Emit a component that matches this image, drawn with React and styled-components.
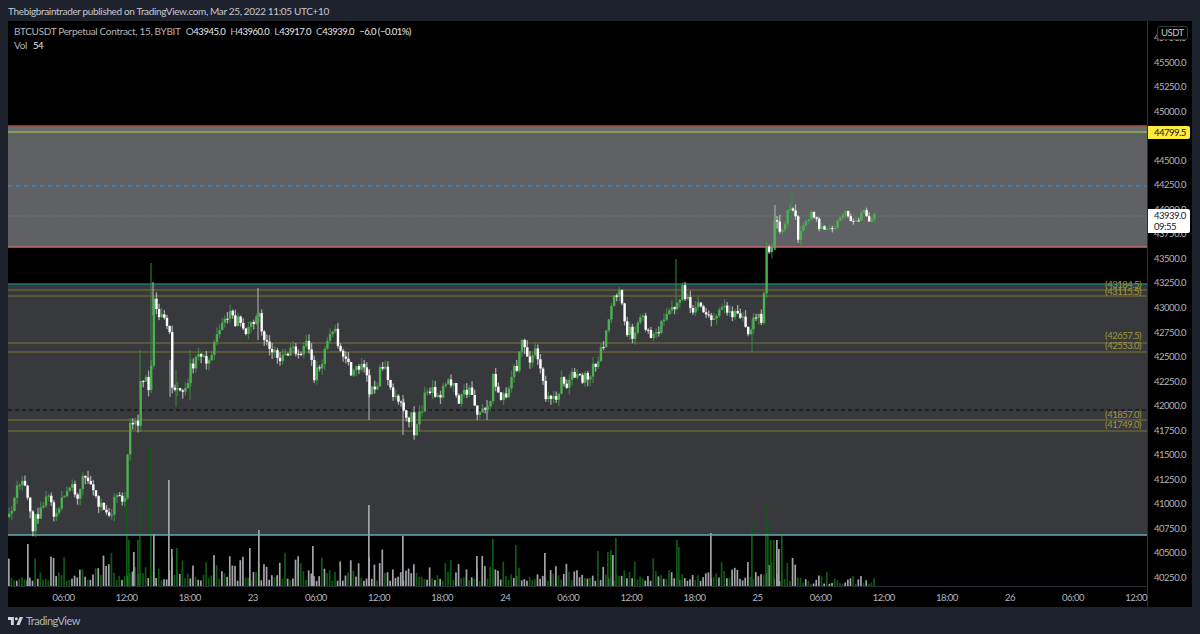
import React from "react";
import styled, { createGlobalStyle, css } from "styled-components";

const GlobalStyle = createGlobalStyle`
	html, body {
		margin: 0;
		padding: 0;
		background: #1e222d;
		overflow: hidden;
	}
`;

// the chart's numbers are set small and tight
const digits = css`
	font-size: 9.5px;
	letter-spacing: -0.5px;
`;

const Page = styled.div`
	width: 1200px;
	height: 634px;
	display: flex;
	flex-direction: column;
	background: #1e222d;
	font-family: Lato, "Open Sans", sans-serif;
	color: #b2b5be;
`;

const Header = styled.div`
	height: 21px;
	padding: 0 8px;
	box-sizing: border-box;
	display: flex;
	align-items: center;
	font-size: 10px;
	letter-spacing: -0.35px;
	color: #c4c7cf;
`;

const Frame = styled.div`
	width: 1184px;
	margin-left: 8px;
	height: 586px;
	background: #000;
	display: flex;
`;

const PlotColumn = styled.div`
	width: 1139px;
	display: flex;
	flex-direction: column;
	border-right: 1px solid #2a2e39;
`;

const Plot = styled.div`
	position: relative;
	height: 566px;
`;

const ChartSvg = styled.svg`
	display: block;
	width: 1139px;
	height: 566px;
`;

const Legend = styled.div`
	position: absolute;
	left: 6px;
	top: 4px;
	display: flex;
	flex-direction: column;
	gap: 1px;
	font-size: 10px;
	letter-spacing: -0.32px;
	line-height: 13px;
`;

const LegendRow = styled.div`
	display: flex;
	gap: ${(p) => p.$gap || 6}px;
`;

const Val = styled.span`
	${digits}
	color: #e6e7ea;
`;

const LevelLabel = styled.span`
	position: absolute;
	right: 6px;
	top: ${(p) => p.$top}px;
	${digits}
	line-height: 12px;
	color: #a09838;
`;

const TimeAxis = styled.div`
	height: 20px;
	padding-left: 24px;
	display: grid;
	grid-template-columns: repeat(18, 63.1px);
	align-items: center;
	${digits}
`;

const TimeLabel = styled.span`
	text-align: center;
`;

const PriceAxis = styled.div`
	position: relative;
	flex: 1;
	padding-top: 5px;
	box-sizing: border-box;
	${digits}
`;

const PriceLabel = styled.div`
	height: 24.55px;
	line-height: 24.55px;
	text-align: center;
`;

const Unit = styled.div`
	position: absolute;
	top: 5px;
	left: 9px;
	padding: 0 3px;
	height: 12px;
	line-height: 12px;
	border: 1px solid #363a45;
	border-radius: 3px;
	background: #000;
	color: #c4c7cf;
`;

const PriceTag = styled.div`
	position: absolute;
	left: 0;
	top: ${(p) => p.$top}px;
	width: 42px;
	box-sizing: border-box;
	padding: 1px 0 1px 6px;
	border-radius: 0 2px 2px 0;
	background: ${(p) => p.$bg};
	color: #131722;
	line-height: 11px;
`;

const Footer = styled.div`
	flex: 1;
	padding-left: 8px;
	display: flex;
	align-items: center;
	gap: 3px;
	font-size: 11px;
	letter-spacing: -0.5px;
	color: #b2b5be;
`;

const PRICES = [];
for (let p = 45750; p >= 40250; p -= 250) PRICES.push(p.toFixed(1));

const TIMES = ["06:00", "12:00", "18:00", "23", "06:00", "12:00", "18:00", "24", "06:00", "12:00", "18:00", "25", "06:00", "12:00", "18:00", "26", "06:00", "12:00"];

const LEVELS = [
	{ text: "(43184.5)", top: 258 },
	{ text: "(43115.5)", top: 265 },
	{ text: "(42657.5)", top: 309 },
	{ text: "(42553.0)", top: 319 },
	{ text: "(41857.0)", top: 388 },
	{ text: "(41749.0)", top: 398 },
];

// close price path, in page pixels
const PATH = [
	[8, 517], [12, 503], [17, 487], [22, 487], [27, 500], [32, 527], [37, 513], [43, 502], [48, 500], [53, 517],
	[62, 493], [72, 490], [75, 497], [83, 477], [88, 487], [98, 508], [110, 513], [115, 495], [120, 502], [125, 492],
	[127, 440], [130, 417], [137, 420], [140, 380], [147, 385], [150, 373], [152, 302], [157, 310], [163, 320], [168, 323],
	[170, 387], [177, 388], [187, 385], [190, 365], [200, 355], [205, 363], [213, 342], [217, 328], [227, 315], [237, 322],
	[245, 328], [257, 317], [263, 337], [277, 353], [283, 357], [290, 347], [300, 353], [307, 345], [313, 380], [325, 350],
	[335, 327], [338, 353], [345, 358], [353, 378], [360, 362], [368, 390], [375, 385], [382, 360], [390, 390], [402, 400],
	[403, 425], [410, 413], [413, 430], [420, 407], [430, 385], [437, 400], [445, 387], [452, 380], [458, 403], [470, 387],
	[477, 413], [487, 413], [492, 377], [500, 403], [510, 382], [522, 343], [527, 360], [537, 353], [545, 397], [557, 395],
	[560, 377], [567, 385], [575, 370], [580, 383], [595, 363], [603, 347], [608, 310], [613, 297], [618, 295], [625, 333],
	[633, 333], [640, 317], [648, 337], [662, 323], [670, 313], [678, 300], [682, 290], [690, 307], [697, 305], [715, 317],
	[723, 305], [737, 317], [747, 330], [753, 313], [762, 317], [765, 253], [770, 247], [775, 213], [778, 230], [787, 213],
	[793, 203], [797, 233], [810, 213], [820, 228], [832, 228], [840, 212], [853, 220], [863, 213], [867, 223], [875, 216],
];

// long wicks that stand out from the noise
const WICKS = [
	{ x: 140, y1: 350, y2: 400, up: true },
	{ x: 151, y1: 263, y2: 376, up: true },
	{ x: 153, y1: 282, y2: 315, up: false },
	{ x: 170, y1: 360, y2: 397, up: false },
	{ x: 176, y1: 370, y2: 407, up: true },
	{ x: 190, y1: 350, y2: 400, up: true },
	{ x: 258, y1: 288, y2: 340, up: false },
	{ x: 369, y1: 370, y2: 420, up: false },
	{ x: 403, y1: 395, y2: 435, up: false },
	{ x: 487, y1: 400, y2: 420, up: false },
	{ x: 676, y1: 259, y2: 310, up: true },
	{ x: 752, y1: 320, y2: 352, up: true },
	{ x: 792, y1: 192, y2: 220, up: true },
	{ x: 775, y1: 205, y2: 250, up: false },
];

// volume spikes read off the picture
const SPIKES = [
	[27, 544, 0], [126, 497, 1], [128, 540, 1], [133, 552, 0], [137, 540, 1], [139, 500, 1], [150, 445, 1], [153, 534, 0],
	[168, 480, 0], [171, 549, 0], [176, 548, 1], [249, 548, 0], [258, 530, 0], [312, 546, 0], [368, 505, 0], [402, 536, 0],
	[476, 556, 0], [492, 539, 1], [515, 545, 1], [544, 553, 0], [607, 552, 1], [610, 550, 1], [612, 555, 0], [615, 538, 1],
	[676, 540, 1], [678, 547, 1], [710, 533, 0], [751, 524, 1], [765, 505, 1], [767, 523, 1], [770, 540, 1], [773, 540, 1],
	[776, 540, 0], [778, 549, 0], [781, 535, 1],
];

const makeRand = (seed) => () => {
	seed = (seed * 16807) % 2147483647;
	return seed / 2147483647;
};

const pathY = (x) => {
	for (let i = 1; i < PATH.length; i++) {
		if (x <= PATH[i][0]) {
			const [x0, y0] = PATH[i - 1];
			const [x1, y1] = PATH[i];
			return y0 + ((y1 - y0) * (x - x0)) / (x1 - x0);
		}
	}
	return PATH[PATH.length - 1][1];
};

const STEP = 2.63;
const rand = makeRand(20220325);

const buildCandles = () => {
	const list = [];
	let prev = pathY(8);
	for (let x = 8; x <= 875; x += STEP) {
		const size = x > 800 ? 4 : 7;
		const close = pathY(x) + (rand() - 0.5) * size * 2;
		const up = close < prev;
		const top = Math.min(prev, close);
		const bottom = Math.max(prev, close);
		list.push({
			x,
			up,
			top,
			h: Math.max(bottom - top, 1),
			wickTop: top - rand() * size,
			wickBottom: bottom + rand() * size,
		});
		prev = close;
	}
	return list;
};

const CANDLES = buildCandles();

const buildVolumes = () => {
	const list = [];
	CANDLES.forEach((c, i) => {
		const fade = c.x > 800 ? 0.4 : 1;
		const top = 586 - (5 + rand() * rand() * 32) * fade;
		list.push({ x: c.x, top, up: i % 3 === 0 ? rand() > 0.5 : c.up });
	});
	return list;
};

const VOLUMES = buildVolumes();

const GREEN = "#4caf50";
const VOL_GREEN = "#0f5a14";
const VOL_GREY = "#a3a4a8";

const Chart = () => (
	<ChartSvg viewBox="8 21 1139 566">
		<rect x="8" y="126" width="1139" height="121" fill="#606165" />
		<rect x="8" y="127" width="1139" height="4" fill="#6a6a6c" />
		<rect x="8" y="284" width="1139" height="251" fill="#38393d" />

		{VOLUMES.map((v, i) => (
			<rect key={i} x={v.x} y={v.top} width="1.7" height={586 - v.top} fill={v.up ? VOL_GREEN : VOL_GREY} />
		))}
		{SPIKES.map(([x, top, up], i) => (
			<rect key={i} x={x} y={top} width="1.7" height={586 - top} fill={up ? VOL_GREEN : VOL_GREY} />
		))}

		<line x1="8" x2="1147" y1="126" y2="126" stroke="#a5524a" strokeWidth="1.5" />
		<line x1="8" x2="1147" y1="132" y2="132" stroke="#8fb356" strokeWidth="1.5" />
		<line x1="8" x2="1147" y1="247" y2="247" stroke="#c26a68" strokeWidth="1.5" />
		<line x1="8" x2="1147" y1="186" y2="186" stroke="#2196f3" strokeWidth="1.2" strokeDasharray="4 4" />
		<line x1="8" x2="1147" y1="216" y2="216" stroke="#818285" strokeWidth="1" strokeDasharray="1 2" />
		<line x1="8" x2="1147" y1="284" y2="284" stroke="#177a78" strokeWidth="1.5" />
		<line x1="8" x2="1147" y1="535" y2="535" stroke="#62aab2" strokeWidth="1.5" />
		{[290, 296, 343, 352, 420, 431].map((y) => (
			<line key={y} x1="8" x2="1147" y1={y} y2={y} stroke="#7d7636" strokeWidth="1.2" />
		))}
		<line x1="8" x2="1147" y1="410" y2="410" stroke="#0c0c0e" strokeWidth="1" strokeDasharray="4 3" />

		{WICKS.map((w, i) => (
			<line key={i} x1={w.x} x2={w.x} y1={w.y1} y2={w.y2} stroke={w.up ? "#3a8a3f" : "#b9babc"} strokeWidth="1" />
		))}
		{CANDLES.map((c, i) => (
			<g key={i} fill={c.up ? GREEN : "#fff"}>
				<rect x={c.x + 0.5} y={c.wickTop} width="1.3" height={c.wickBottom - c.wickTop} opacity="0.55" />
				<rect x={c.x} y={c.top} width="2.4" height={c.h} />
			</g>
		))}
		<line x1="8" x2="1147" y1="586.5" y2="586.5" stroke="#2a2e39" strokeWidth="1" />
	</ChartSvg>
);

const Logo = () => (
	<svg width="15" height="8" viewBox="0 0 36 19">
		<path d="M14 19H7V7H0V0h14v19zM28 19h-8L28 0h8l-8 19z" fill="#d1d4dc" />
		<circle cx="20" cy="4" r="3.6" fill="#d1d4dc" />
	</svg>
);

const App = () => (
	<Page>
		<GlobalStyle />
		<Header>Thebigbraintrader published on TradingView.com, Mar 25, 2022 11:05 UTC+10</Header>
		<Frame>
			<PlotColumn>
				<Plot>
					<Chart />
					<Legend>
						<LegendRow $gap={5}>
							<span>BTCUSDT Perpetual Contract, 15, BYBIT</span>
							<span>O<Val>43945.0</Val></span>
							<span>H<Val>43960.0</Val></span>
							<span>L<Val>43917.0</Val></span>
							<span>C<Val>43939.0</Val></span>
							<Val>−6.0 (−0.01%)</Val>
						</LegendRow>
						<LegendRow $gap={6}>
							<span>Vol</span>
							<Val>54</Val>
						</LegendRow>
					</Legend>
					{LEVELS.map((l) => (
						<LevelLabel key={l.text} $top={l.top}>{l.text}</LevelLabel>
					))}
				</Plot>
				<TimeAxis>
					{TIMES.map((t, i) => (
						<TimeLabel key={i}>{t}</TimeLabel>
					))}
				</TimeAxis>
			</PlotColumn>
			<PriceAxis>
				{PRICES.map((p) => (
					<PriceLabel key={p}>{p}</PriceLabel>
				))}
				<Unit>USDT</Unit>
				<PriceTag $top={105} $bg="#ffeb3b">44799.5</PriceTag>
				<PriceTag $top={188} $bg="#fff">43939.0<br />09:55</PriceTag>
			</PriceAxis>
		</Frame>
		<Footer>
			<Logo />
			<span>TradingView</span>
		</Footer>
	</Page>
);

export default App;
